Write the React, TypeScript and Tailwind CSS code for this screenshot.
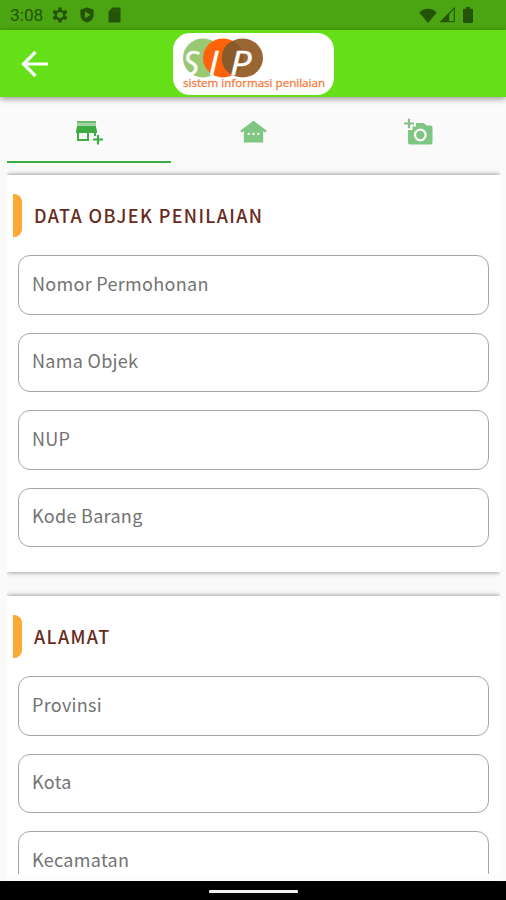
import { MdOtherHouses } from "react-icons/md";

function Gear() {
  return (
    <svg viewBox="0 0 16 16" className="ml-[8px] h-4 w-4" fill="none" stroke="currentColor">
      <circle cx="8" cy="8" r="4.300" strokeWidth="2.600" />
      <path d="M8 .4V3.400M8 12.600V15.600M1.400 4.200 4 5.700M12 10.300 14.600 11.800M1.400 11.800 4 10.300M12 5.700 14.600 4.200" strokeWidth="3.400" />
    </svg>
  );
}

function ShieldPlay() {
  return (
    <svg viewBox="0 0 14 16" className="ml-[11.500px] h-4 w-3.5" fill="none">
      <path d="M7 1.200 12.800 3.200V8C12.800 11 10.300 13.600 7 14.800C3.700 13.600 1.200 11 1.200 8V3.200Z" fill="#245408" stroke="#245408" strokeWidth="1.600" strokeLinejoin="round" />
      <path d="M5 4.600 10.600 7.900 5 11.200Z" fill="#4ba411" />
    </svg>
  );
}

function StatusBar() {
  return (
    <div className="flex h-[30px] shrink-0 items-center bg-[#4ba411] pl-2.5 pr-[33px] text-[#245408]">
      <span className="w-[34px] pt-px font-['Roboto',sans-serif] text-[17.300px] leading-none">3:08</span>
      <Gear />
      <ShieldPlay />
      <svg viewBox="0 0 13 16" className="ml-[14.500px] h-[16px] w-[13px]">
        <path d="M4.500 .5H11.500Q12.500 .5 12.500 1.500V14.500Q12.500 15.500 11.500 15.500H1.500Q.5 15.500 .5 14.500V4.500Z" fill="currentColor" />
        <path d="M5 2.800V5M7.400 2.800V5M9.800 2.800V5" stroke="#346d0c" />
      </svg>
      <svg viewBox="0 0 18 15" className="ml-auto h-[15px] w-[18px]" fill="currentColor">
        <path d="M0.300 4.500C5-.4 13-.4 17.700 4.500L9 15Z" />
      </svg>
      <svg viewBox="0 0 16 16" className="ml-[2.500px] size-[15.500px]">
        <path d="M0 15.600 9.500 6V15.600Z" fill="currentColor" />
        <path d="M.8 15.200 14.800 1.200V15.200Z" fill="none" stroke="currentColor" strokeWidth="1.100" />
      </svg>
      <svg viewBox="0 0 10 16" className="ml-[8px] h-[16px] w-[10px]" fill="currentColor">
        <path d="M3 0H7V1.700H9Q10 1.700 10 2.700V15Q10 16 9 16H1Q0 16 0 15V2.700Q0 1.700 1 1.700H3Z" />
      </svg>
    </div>
  );
}

function Logo() {
  return (
    <svg viewBox="0 0 161 62" className="h-[62px] w-[161px] rounded-[17px] bg-white">
      <ellipse cx="30" cy="25" rx="20" ry="19.500" fill="#9bc874" />
      <ellipse cx="50" cy="25" rx="20" ry="19.500" fill="#ff6309" />
      <ellipse cx="69.500" cy="25" rx="20.500" ry="19.500" fill="#996633" />
      <path d="M59.500 7.800A20 19.500 0 0 1 59.500 42.200A20.500 19.500 0 0 1 59.500 7.800Z" fill="#8b5a2a" />
      <g fill="#fff" stroke="#fff" strokeWidth=".4" fontFamily="Open Sans, sans-serif" fontStyle="italic" fontSize="32">
        <text x="10" y="41.500" textLength="16" lengthAdjust="spacingAndGlyphs">S</text>
        <text x="35.500" y="41.500" textLength="10" lengthAdjust="spacingAndGlyphs">I</text>
        <text x="57" y="41.500" textLength="21.500" lengthAdjust="spacingAndGlyphs">P</text>
      </g>
      <text x="10" y="54" fill="#f28149" stroke="#f28149" strokeWidth=".35" fontFamily="Open Sans, sans-serif" fontSize="11.500" textLength="142" lengthAdjust="spacingAndGlyphs">sistem informasi penilaian</text>
    </svg>
  );
}

function StorePlus() {
  return (
    <svg viewBox="0 0 28 26" className="h-[26px] w-[28px]">
      <path d="M2 2H21V4H2Z" fill="#69bd6d" />
      <path d="M2 4H21V7H2Z" fill="#a1d5a3" />
      <path d="M2.200 7H20.800L22 12V14H1V12Z" fill="#3dac42" />
      <path fillRule="evenodd" d="M2 14H14V22H2ZM4 14V20H12V14Z" fill="#3dac42" />
      <path d="M19 14H21V17H19Z" fill="#3dac42" />
      <path d="M18 20.500H28M23 16V25.500" stroke="#3dac42" strokeWidth="2.200" />
    </svg>
  );
}

function CameraPlus() {
  return (
    <svg viewBox="0 0 30 28" className="h-[28px] w-[30px]">
      <path d="M13 5H21L23.500 7.500H27.500Q29.500 7.500 29.500 9.500V24.500Q29.500 26.500 27.500 26.500H7Q5 26.500 5 24.500V12H9.500V8.500H13Z" fill="#7fc683" />
      <path d="M1 5.500H11M6 .8V10.300" stroke="#87bd89" strokeWidth="2.200" />
      <circle cx="17.300" cy="17" r="5.300" fill="none" stroke="#fafafa" strokeWidth="2.300" />
    </svg>
  );
}

function AppBar() {
  return (
    <header className="relative z-10 grid h-[67px] shrink-0 grid-cols-[1fr_161px_1fr] items-center bg-[#65df18] shadow-[0_2px_6px_rgba(0,0,0,0.4)]">
      <svg viewBox="0 0 28 28" className="ml-[21px] size-[28px]" fill="none" stroke="#fff" strokeWidth="3.200">
        <path d="M27 14H3M14.500 2 2.500 14 14.500 26" />
      </svg>
      <Logo />
    </header>
  );
}

function Tabs() {
  return (
    <nav className="mx-[7px] grid h-[66px] shrink-0 grid-cols-3 text-[#7fc683]">
      <div className="flex items-center justify-center border-b-2 border-[#3dac42] pt-1.5"><StorePlus /></div>
      <div className="flex items-center justify-center pt-[3px]"><MdOtherHouses className="size-[29px]" /></div>
      <div className="flex items-center justify-center pl-px pt-[3px]"><CameraPlus /></div>
    </nav>
  );
}

function Section({ title, fields }: { title: string; fields: string[] }) {
  return (
    <section className="h-[397px] shrink-0 bg-white pl-[6px] pr-[11px] pt-[19px] shadow-[0_0_5px_rgba(0,0,0,0.5)]">
      <div className="flex h-[43px] items-center">
        <div className="h-full w-[9px] rounded-r-[8px] bg-[#ffa834]" />
        <h2 className="ml-3 pb-px text-[18px] font-medium leading-none tracking-[1.360px] text-[#672b20]">{title}</h2>
      </div>
      <div className="ml-[5px] mt-[18px] flex flex-col gap-[18px]">
        {fields.map((field) => (
          <div key={field} className="flex h-[59.500px] shrink-0 items-center rounded-[12px] border border-[#a6a6a6] pb-[4px] pl-[13px] text-[18px] leading-none tracking-[0.300px] text-[#737373]">{field}</div>
        ))}
      </div>
    </section>
  );
}

export default function App() {
  return (
    <div className="flex h-[900px] w-[506px] flex-col overflow-hidden bg-[#fafafa] font-['Noto_Sans_CJK_SC',sans-serif]">
      <StatusBar />
      <AppBar />
      <Tabs />
      <main className="ml-[7px] mr-[6px] flex min-h-0 flex-1 flex-col gap-[24px] overflow-hidden pt-[12px]">
        <Section title="DATA OBJEK PENILAIAN" fields={["Nomor Permohonan", "Nama Objek", "NUP", "Kode Barang"]} />
        <Section title="ALAMAT" fields={["Provinsi", "Kota", "Kecamatan"]} />
      </main>
      <div className="ml-[7px] mr-[6px] h-[7px] shrink-0 bg-[#fdfdfd]" />
      <footer className="flex h-[19px] shrink-0 items-center justify-center bg-black pt-[2px]">
        <div className="h-[3.500px] w-[89px] rounded-[1px] bg-[#f2f2f2]" />
      </footer>
    </div>
  );
}
